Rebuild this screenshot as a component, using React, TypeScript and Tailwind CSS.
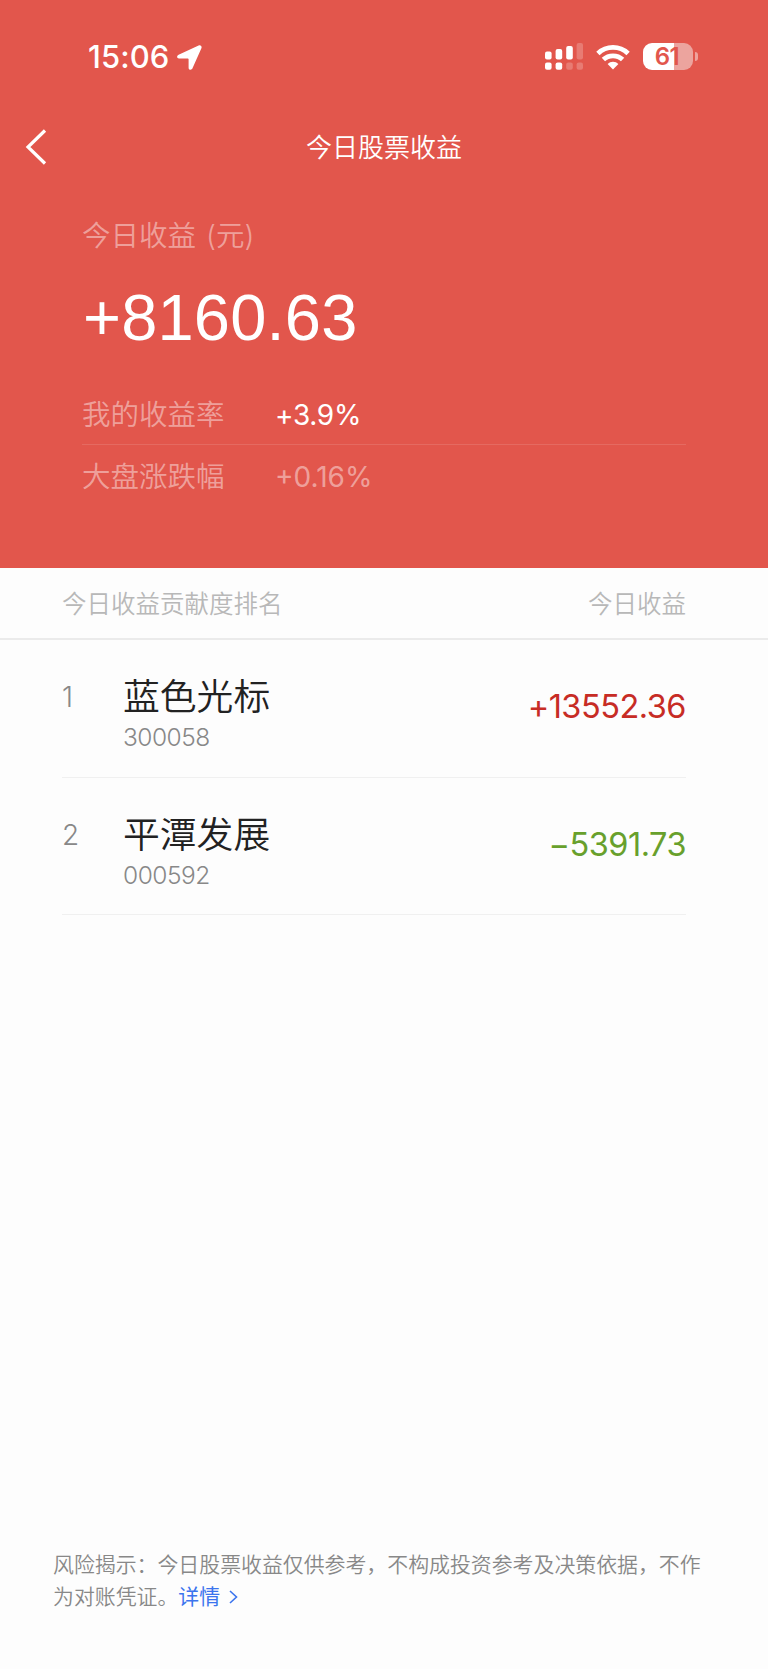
interface Holding {
  rank: number;
  name: string;
  code: string;
  profit: string;
  gain: boolean;
}

const holdings: Holding[] = [
  { rank: 1, name: '蓝色光标', code: '300058', profit: '+13552.36', gain: true },
  { rank: 2, name: '平潭发展', code: '000592', profit: '−5391.73', gain: false },
];

function SignalIcon() {
  return (
    <svg width="38" height="28" viewBox="0 0 38 28" fill="#fff">
      <rect x="0" y="8.5" width="6.6" height="8" rx="2" />
      <rect x="10.6" y="6" width="6.6" height="10.5" rx="2" />
      <rect x="21.2" y="3" width="6.6" height="13.5" rx="2" />
      <rect x="31.6" y="0" width="6.4" height="16.5" rx="2" opacity="0.22" />
      <rect x="0" y="19.5" width="6.6" height="7.2" rx="2" />
      <rect x="10.6" y="19.5" width="6.6" height="7.2" rx="2" />
      <rect x="21.2" y="19.5" width="6.6" height="7.2" rx="2" opacity="0.22" />
      <rect x="31.6" y="19.5" width="6.4" height="7.2" rx="2" opacity="0.22" />
    </svg>
  );
}

function WifiIcon() {
  return (
    <svg width="34" height="26" viewBox="0 0 34 26" fill="none" stroke="#fff" strokeWidth="4.8">
      <path d="M1.9 9.4a22 22 0 0 1 30.2 0" />
      <path d="M7.4 15.6a14 14 0 0 1 19.2 0" />
      <path d="M17 25.4l-5.4-5.4a7.6 7.6 0 0 1 10.8 0z" fill="#fff" stroke="none" />
    </svg>
  );
}

function StatusBar() {
  return (
    <div className="flex h-[107px] items-start justify-between pt-[39px] pl-[88px] pr-[70px] text-white">
      <div className="flex items-center">
        <span className="w-[83px] text-[31px] leading-[36px] font-medium tracking-[0.1px]">15:06</span>
        <svg className="ml-[6px]" width="25" height="25" viewBox="0 0 25 25" fill="#fff">
          <path d="M21.6.4 1.6 9.8C-.7 10.9-.1 13.4 2 13.4h8.4c.8 0 1.2.3 1.2 1.1V22.7c0 2.4 2.9 2.8 3.9.6l8.9-20c.8-1.9-.9-3.7-2.8-2.9z" />
        </svg>
      </div>
      <div className="flex pt-[4px]">
        <SignalIcon />
        <div className="ml-[13px] flex h-[27px] items-center">
          <WifiIcon />
        </div>
        <div className="ml-[13px] flex h-[27px] items-center">
          <div className="flex h-[27px] w-[50px] items-center justify-center rounded-[9px] bg-[linear-gradient(90deg,#fff_61%,#eca49e_61%)] pr-[2px] text-[24px] leading-none font-semibold tracking-[-0.4px] text-[#e2564c]">
            61
          </div>
          <div className="ml-[2px] h-[9px] w-[3px] rounded-r-full bg-white/45" />
        </div>
      </div>
    </div>
  );
}

function NavBar() {
  return (
    <div className="grid h-[80px] grid-cols-[80px_1fr_80px] items-center text-white">
      <svg className="ml-[25px]" width="22" height="36" viewBox="0 0 22 36" fill="none" stroke="#fff" strokeWidth="3.2">
        <path d="M20 1.5 3 18l17 16.5" />
      </svg>
      <h1 className="pt-[2px] text-center text-[26px] leading-[36px] font-[350]">今日股票收益</h1>
    </div>
  );
}

function Summary() {
  return (
    <div className="px-[82px] text-[28.5px] text-white">
      <p className="flex h-[96px] items-center pt-[2px] font-[350] text-white/45">
        今日收益<span className="ml-[10px]">(元)</span>
      </p>
      <p className="h-[110px] pt-[2px] pl-px font-['Liberation_Sans'] text-[65px] leading-[66px] tracking-[0.2px]">
        +8160.63
      </p>
      <div className="flex h-[52px] items-start border-b border-white/12 pt-[2px] leading-[40px]">
        <span className="w-[193px] font-[350] text-white/45">我的收益率</span>
        <span className="text-[28px] tracking-[-0.3px]">+3.9%</span>
      </div>
      <div className="flex h-[52px] items-end leading-[40px] text-white/45">
        <span className="w-[193px] font-[350]">大盘涨跌幅</span>
        <span className="text-[28px]">+0.16%</span>
      </div>
    </div>
  );
}

function HoldingRow({ holding }: { holding: Holding }) {
  return (
    <li className="mr-[82px] ml-[62px] flex h-[137.5px] border-b border-[#f0f0f0]">
      <span className="w-[61px] pt-[39px] text-[28px] leading-[36px] font-light text-[#888]">{holding.rank}</span>
      <div className="flex-1 pt-[33px]">
        <p className="text-[36.8px] leading-[48px] font-[350] text-[#222]">{holding.name}</p>
        <p className="text-[24.5px] leading-[32px] font-light tracking-[-0.5px] text-[#888]">{holding.code}</p>
      </div>
      <span
        className={`pt-[46px] text-[32.5px] leading-[42px] tracking-[-0.5px] ${
          holding.gain ? 'text-[#c72c25]' : 'text-[#68a02c]'
        }`}
      >
        {holding.profit}
      </span>
    </li>
  );
}

export default function App() {
  return (
    <div className="flex h-[1669px] w-[768px] flex-col bg-[#fdfdfd] font-['Inter','Noto_Sans_CJK_SC',sans-serif]">
      <header className="h-[568px] bg-[#e2564c]">
        <StatusBar />
        <NavBar />
        <Summary />
      </header>
      <div className="flex h-[72px] items-center justify-between border-b-2 border-[#ebebeb] pt-[2px] pr-[82px] pl-[62px] text-[24.5px] font-[350] text-[#b8b8b8]">
        <span>今日收益贡献度排名</span>
        <span>今日收益</span>
      </div>
      <ul>
        {holdings.map((holding) => (
          <HoldingRow key={holding.code} holding={holding} />
        ))}
      </ul>
      <footer className="mt-auto mb-[56px] ml-[53px] text-[20.9px] leading-[32px] font-[350] text-[#888]">
        <p>风险揭示：今日股票收益仅供参考，不构成投资参考及决策依据，不作</p>
        <p className="flex items-center">
          为对账凭证。
          <a className="flex items-center font-normal text-[#3b74ee]">
            详情
            <svg className="ml-[9px]" width="9" height="14" viewBox="0 0 9 14" fill="none" stroke="#3b74ee" strokeWidth="1.6">
              <path d="m1 1 6.5 6L1 13" />
            </svg>
          </a>
        </p>
      </footer>
    </div>
  );
}
